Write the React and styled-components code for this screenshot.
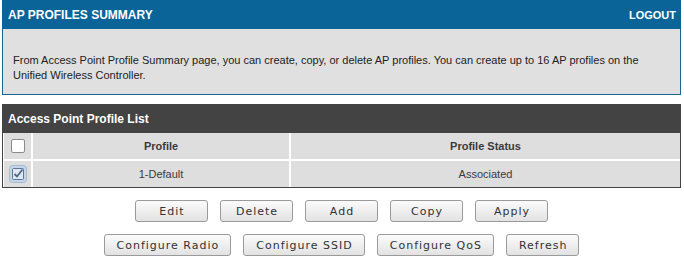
import React from "react";
import styled, { createGlobalStyle } from "styled-components";

const Global = createGlobalStyle`
  html, body { margin: 0; padding: 0; background: #fff; }
  body { font-family: "Liberation Sans", Arial, sans-serif; }
`;

const Page = styled.div`
  width: 684px;
  padding: 0 3px 0 2px;
  box-sizing: border-box;
`;

const Panel = styled.section`
  border: 1px solid #1a6590;
  border-top: none;
  background: #e0e0e0;
`;

const PanelHeader = styled.header`
  height: 29px;
  background: #0a6497;
  display: flex;
  align-items: center;
  justify-content: space-between;
  padding: 0 5px 0 6px;
  margin: 0 -1px;
  color: #fff;
  font-weight: bold;
`;

const Title = styled.h1`
  margin: 0;
  font-size: 12px;
  font-weight: bold;
`;

const Logout = styled.a`
  font-size: 11px;
  color: #fff;
  text-decoration: none;
`;

const Intro = styled.p`
  margin: 0;
  padding: 24px 10px 11px 10px;
  font-size: 11px;
  line-height: 15px;
  color: #222;
`;

const ListBox = styled.section`
  margin-top: 9px;
  border: 1px solid #434343;
  border-top: none;
`;

const ListHeader = styled.h2`
  margin: 0 -1px;
  height: 29px;
  background: #434343;
  color: #fff;
  font-size: 12px;
  font-weight: bold;
  display: flex;
  align-items: center;
  padding-left: 6px;
`;

const Grid = styled.div`
  display: grid;
  grid-template-columns: 27px 256px 1fr;
  grid-auto-rows: 26px;
  gap: 2px;
  padding-left: 1px;
  background: #fff;
`;

const Cell = styled.div`
  background: #dedede;
  display: flex;
  align-items: center;
  justify-content: center;
  font-size: 11px;
  color: #3a3a3a;
  font-weight: ${(p) => (p.$head ? "bold" : "normal")};
`;

const Box = styled.span`
  width: 12px;
  height: 12px;
  border: 1px solid #8a8a8a;
  border-radius: 2px;
  background: #fff;
  display: block;
`;

const Buttons = styled.div`
  display: flex;
  flex-direction: column;
  align-items: center;
  gap: 12px;
  margin-top: 12px;
`;

const ButtonRow = styled.div`
  display: flex;
  justify-content: center;
  gap: ${(p) => p.$gap}px;
`;

const Button = styled.button`
  height: 22px;
  min-width: 73px;
  padding: 0 11px 0 12px;
  border: 1px solid #9a9a9a;
  border-radius: 3px;
  background: linear-gradient(#fbfbfb, #e2e2e2);
  color: #333;
  font-family: "DejaVu Sans", sans-serif;
  font-size: 11px;
  letter-spacing: 1px;
  box-sizing: border-box;
`;

const Checked = () => (
  <svg width="18" height="18" viewBox="0 0 18 18">
    <rect x="0.5" y="0.5" width="17" height="17" rx="3" fill="#c3d5e6" stroke="#a3bad0" />
    <rect x="3.5" y="3.5" width="11" height="11" rx="1" fill="#dfe8f1" stroke="#5a7793" />
    <path d="M5.5 9 L8 11.5 L13.5 4.5" fill="none" stroke="#4b6a88" strokeWidth="1.8" />
  </svg>
);

export default function App() {
  return (
    <Page>
      <Global />
      <Panel>
        <PanelHeader>
          <Title>AP PROFILES SUMMARY</Title>
          <Logout href="#">LOGOUT</Logout>
        </PanelHeader>
        <Intro>
          From Access Point Profile Summary page, you can create, copy, or delete AP profiles. You can create up to 16 AP profiles on the Unified Wireless Controller.
        </Intro>
      </Panel>
      <ListBox>
        <ListHeader>Access Point Profile List</ListHeader>
        <Grid>
          <Cell><Box /></Cell>
          <Cell $head>Profile</Cell>
          <Cell $head>Profile Status</Cell>
          <Cell><Checked /></Cell>
          <Cell>1-Default</Cell>
          <Cell>Associated</Cell>
        </Grid>
      </ListBox>
      <Buttons>
        <ButtonRow $gap={12}>
          <Button>Edit</Button>
          <Button>Delete</Button>
          <Button>Add</Button>
          <Button>Copy</Button>
          <Button>Apply</Button>
        </ButtonRow>
        <ButtonRow $gap={12}>
          <Button>Configure Radio</Button>
          <Button>Configure SSID</Button>
          <Button>Configure QoS</Button>
          <Button>Refresh</Button>
        </ButtonRow>
      </Buttons>
    </Page>
  );
}
